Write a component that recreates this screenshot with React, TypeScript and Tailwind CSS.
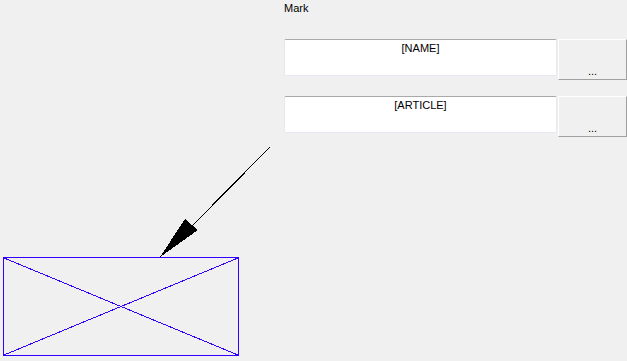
import React from 'react';

const font = { fontFamily: '"Liberation Sans", Arial, sans-serif' };

const FieldRow: React.FC<{ value: string }> = ({ value }) => (
  <div className="flex gap-[1px]">
    <div className="w-[273px] h-[37px] bg-white border border-[#e3e9ef] border-t-[#a9a9a9] rounded-[2px] pt-[2px] text-center text-[11px] leading-[13px] text-black">
      {value}
    </div>
    <button className="w-[69px] h-[41px] bg-[#f0f0f0] border border-white border-r-[#a0a0a0] border-b-[#a0a0a0] flex items-end justify-center pb-[1px] text-[11px] leading-[13px] text-black">
      ...
    </button>
  </div>
);

export default function App() {
  return (
    <div className="w-[627px] h-[361px] bg-[#f0f0f0] flex overflow-hidden" style={font}>
      <svg width="284" height="361" className="shrink-0" shapeRendering="crispEdges">
        <line x1="270" y1="147" x2="190" y2="228" stroke="#000" strokeWidth="1" />
        <polygon points="160,257 185,219 198,230" fill="#000" />
        <rect x="3.5" y="257.5" width="235" height="98" fill="none" stroke="#3300ff" strokeWidth="1" />
        <line x1="4" y1="258" x2="238" y2="355" stroke="#3300ff" strokeWidth="1" />
        <line x1="4" y1="355" x2="238" y2="258" stroke="#3300ff" strokeWidth="1" />
      </svg>
      <div className="flex flex-col pt-[2px]">
        <div className="text-[11px] leading-[13px] text-black">Mark</div>
        <div className="mt-[24px] flex flex-col gap-[16px]">
          <FieldRow value="[NAME]" />
          <FieldRow value="[ARTICLE]" />
        </div>
      </div>
    </div>
  );
}
